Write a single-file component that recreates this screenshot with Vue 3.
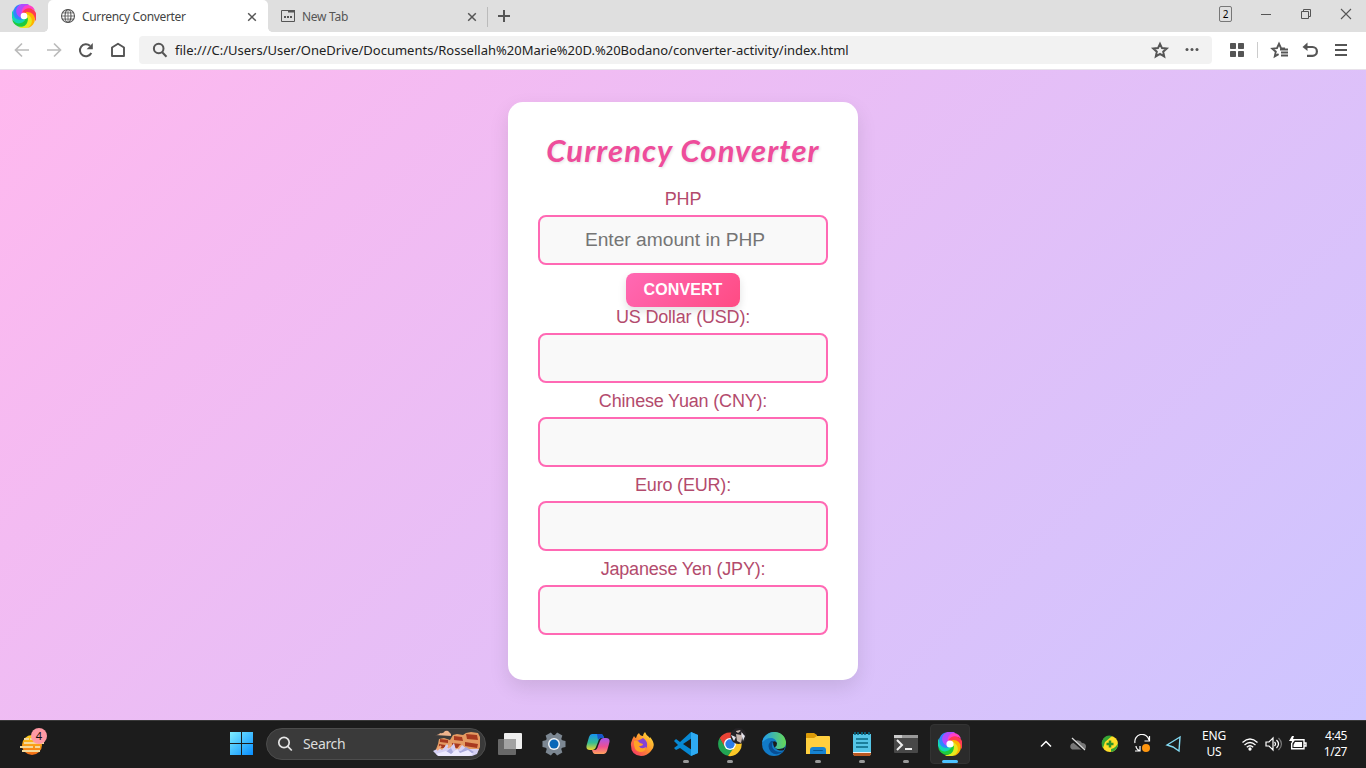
<script setup>
import { ref } from 'vue'

const amount = ref('')
const currencies = ['US Dollar (USD):', 'Chinese Yuan (CNY):', 'Euro (EUR):', 'Japanese Yen (JPY):']
const swirl = [
  { color: '#ff3fc8', angle: 0 },
  { color: '#ff3b52', angle: 50 },
  { color: '#ffb300', angle: 100 },
  { color: '#e6ea1e', angle: 140 },
  { color: '#1ecb3c', angle: 190 },
  { color: '#12d6b4', angle: 235 },
  { color: '#2f86ff', angle: 280 },
  { color: '#b04bff', angle: 320 },
]
</script>

<template>
  <div class="screen">
    <header class="tabs">
      <div class="logo">
        <svg width="24" height="24" viewBox="-12 -12 24 24">
          <circle r="8" fill="none" stroke="#e8c8d8" stroke-width="5" />
          <path v-for="s in swirl" :key="s.color" :fill="s.color" :transform="`rotate(${s.angle})`" d="M-4-1C-6-7-2-12 4-11.300C8-10.500 10.500-8 11-5C8-8 3-8 0-3.500Z" />
          <circle r="3.300" fill="#fff" />
        </svg>
      </div>
      <div class="tab active">
        <svg width="16" height="16" viewBox="0 0 16 16" fill="none" stroke="#555" stroke-width="1.100">
          <circle cx="8" cy="8" r="6.500" /><ellipse cx="8" cy="8" rx="3" ry="6.500" /><path d="M8 1.500v13M1.500 8h13M2.500 4.900h11M2.500 11.100h11" stroke-width=".8" />
        </svg>
        <span class="tab-name first">Currency Converter</span>
        <svg class="x" width="10" height="10" viewBox="0 0 10 10"><path d="M1.200 1.200l7.600 7.600M8.800 1.200L1.200 8.800" stroke="#555" stroke-width="1.500" /></svg>
      </div>
      <div class="tab">
        <svg width="16" height="16" viewBox="0 0 16 16"><path d="M1.500 2.500h13v11h-13z" fill="none" stroke="#555" /><path d="M8 2h7v2.500H8zM4 8h2v2H4zM7 8h2v2H7zM10 8h2v2h-2z" fill="#555" /></svg>
        <span class="tab-name second">New Tab</span>
        <svg class="x" width="10" height="10" viewBox="0 0 10 10"><path d="M1.200 1.200l7.600 7.600M8.800 1.200L1.200 8.800" stroke="#555" stroke-width="1.500" /></svg>
      </div>
      <i class="tab-sep"></i>
      <svg class="plus" width="12" height="12" viewBox="0 0 12 12"><path d="M6 0v12M0 6h12" stroke="#555" stroke-width="2" /></svg>
      <div class="window">
        <b class="count">2</b>
        <svg viewBox="0 0 40 28" width="40" height="28"><path d="M15 14.500h10" stroke="#555" /></svg>
        <svg viewBox="0 0 40 28" width="40" height="28" fill="none" stroke="#555"><path d="M15.500 11.500h7v7h-7zM17.500 11.500v-2h7v7h-2" /></svg>
        <svg viewBox="0 0 40 28" width="40" height="28"><path d="M15 9l10 10M25 9L15 19" stroke="#555" stroke-width="1.100" /></svg>
      </div>
    </header>

    <nav class="toolbar">
      <svg viewBox="0 0 32 28" width="32" height="28" fill="none" stroke="#bbb" stroke-width="1.700"><path d="M23 14H10M16 7.500L9.500 14l6.500 6.500" /></svg>
      <svg viewBox="0 0 32 28" width="32" height="28" fill="none" stroke="#bbb" stroke-width="1.700"><path d="M9 14h13M16 7.500l6.500 6.500-6.500 6.500" /></svg>
      <svg viewBox="0 0 32 28" width="32" height="28"><path d="M21.300 17A6 6 0 1 1 20 9.800" fill="none" stroke="#555" stroke-width="2" /><path d="M22.800 7v6.300h-6.200z" fill="#555" /></svg>
      <svg viewBox="0 0 32 28" width="32" height="28"><path d="M10 20v-8.500L16 7.800l6 3.700V20z" fill="none" stroke="#555" stroke-width="1.900" stroke-linejoin="round" /></svg>
      <div class="address">
        <svg viewBox="0 0 16 16" width="16" height="16" fill="none" stroke="#555" stroke-width="2"><circle cx="6.700" cy="6.500" r="4.800" /><path d="M10.200 10.200l4.300 4.500" /></svg>
        <span>file:///C:/Users/User/OneDrive/Documents/Rossellah%20Marie%20D.%20Bodano/converter-activity/index.html</span>
        <svg class="star" viewBox="0 0 32 28" width="32" height="28"><path d="M16 7.800l2 4.300 4.700.5-3.500 3.100 1 4.700-4.200-2.400-4.200 2.400 1-4.700-3.500-3.100 4.700-.5z" fill="none" stroke="#555" stroke-width="2" /></svg>
        <svg viewBox="0 0 32 28" width="32" height="28" fill="#555"><circle cx="11" cy="13.500" r="1.500" /><circle cx="16" cy="13.500" r="1.500" /><circle cx="21" cy="13.500" r="1.500" /></svg>
      </div>
      <svg class="apps" viewBox="0 0 14 14" width="14" height="14" fill="#555"><rect width="6" height="6" rx=".7" /><rect x="8" width="6" height="6" rx=".7" /><rect y="8" width="6" height="6" rx=".7" /><rect x="8" y="8" width="6" height="6" rx=".7" /></svg>
      <i class="tool-sep"></i>
      <svg class="fav" viewBox="0 0 30 28" width="30" height="28" fill="none" stroke="#555"><path d="M20 12.500l-4-.4-2-4.300-2 4.300-4.700.5 3.500 3.100-1 4.700 3.800-2.300" stroke-width="1.900" /><path d="M15 13.500h8M16 16.500h7M16 19.500h7" stroke-width="1.800" /></svg>
      <svg viewBox="0 0 30 28" width="30" height="28"><path d="M11 11h6.500a4.400 4.400 0 0 1 0 8.800H12" fill="none" stroke="#555" stroke-width="2.200" /><path d="M12.500 6.500v8.500L7.500 11z" fill="#555" /></svg>
      <svg viewBox="0 0 30 28" width="30" height="28"><path d="M10 9h12M10 14h12M10 19h12" stroke="#555" stroke-width="2" /></svg>
    </nav>

    <main>
      <section class="card">
        <h1>Currency Converter</h1>
        <label>PHP</label>
        <input v-model="amount" placeholder="Enter amount in PHP" class="amount">
        <button>CONVERT</button>
        <template v-for="name in currencies" :key="name">
          <label>{{ name }}</label>
          <input readonly>
        </template>
      </section>
    </main>

    <footer class="taskbar">
      <div class="weather">
        <svg width="26" height="28" viewBox="0 0 26 28"><defs><linearGradient id="sun" x2="0" y2="1"><stop stop-color="#ffd21c" /><stop offset="1" stop-color="#f36b16" /></linearGradient></defs><circle cx="12" cy="17" r="10" fill="url(#sun)" /><path d="M4 11h5M10 11h7M4 15h20M0 19h13M15 19h5M2 23h18" stroke="#f5d898" stroke-width="1.900" /></svg>
        <b>4</b>
      </div>
      <svg class="start" viewBox="0 0 23 23" width="23" height="23"><defs><linearGradient id="win" x2="1" y2="1"><stop stop-color="#7eeeff" /><stop offset="1" stop-color="#078dff" /></linearGradient></defs><path d="M0 0h11v11H0zM12 0h11v11H12zM0 12h11v11H0zM12 12h11v11H12z" fill="url(#win)" /></svg>
      <div class="search">
        <svg width="16" height="16" viewBox="0 0 16 16" fill="none" stroke="#e5e5e5" stroke-width="1.700"><circle cx="7" cy="6.500" r="5.200" /><path d="M10.800 10.400l4 4.100" /></svg>
        <span>Search</span>
        <svg class="canyon" width="48" height="27" viewBox="0 0 48 27">
          <path d="M2 5q4 0 5-2 3 1 5-2 3-1 4 1l2 2v2z" fill="#edb38d" />
          <path d="M2 22l3-8 1-5 5-1 3 1 3 1 3-5 4-1 6 1 3-2 5-1 7 1 2 4v10l-3 6H5z" fill="#e39a62" />
          <path d="M7 9l8 1v3l-8-1zM21 6l8 1 1 4-9-1zM33 4l11 1 1 5-11-1zM6 14l6 1v3H6zM19 13l9 1-1 4h-8zM32 12l13 2-1 4-12-2z" fill="#a83a20" />
          <path d="M0 21l6-3 3 2 5-6 3 4 4-5 2 7 6-5 5 4 12 0-2 5-5 2H5z" fill="#d5d0f4" />
          <path d="M4 20l4-4M15 18l3-4M25 19l3-4" stroke="#f0a878" stroke-width="2" /><path d="M10 24l8-6 2 4 8-1 5-4 8 5-5 3z" fill="#a9a9dd" /><path d="M3 24l10-3 5 3 6-5 3 4 8-3 5 4-4 2H6z" fill="#edeaff" />
        </svg>
      </div>
      <div class="apps-row">
        <div class="app"><svg width="24" height="24" viewBox="0 0 24 24"><rect x="6" y="1" width="18" height="16" rx="1" fill="#eee" /><rect y="7" width="18" height="16" rx="1" fill="#686868" /><path d="M6 7h12v10H6z" fill="#a2a2a2" /></svg></div>
        <div class="app"><svg width="24" height="24" viewBox="-12 -12 24 24"><g fill="#7c8792"><circle r="9" /><path v-for="n in 6" :key="n" :transform="`rotate(${n * 60 + 30})`" d="M-4-7l1-4.500h6L4-7z" /></g><circle r="6" fill="#f0f3f6" /><circle r="4.500" fill="#0867b8" /></svg></div>
        <div class="app"><svg width="24" height="24" viewBox="0 0 24 24"><defs><linearGradient id="co1" x2="0" y2="1"><stop stop-color="#1692f2" /><stop offset=".55" stop-color="#36bd91" /><stop offset="1" stop-color="#f0d52d" /></linearGradient><linearGradient id="co2" x2="0" y2="1"><stop stop-color="#a657ee" /><stop offset=".55" stop-color="#ef4f91" /><stop offset="1" stop-color="#ffa35c" /></linearGradient></defs><path d="M6 2h9q2 0 3 4h-3q-2 0-3 4l-2 5q-1 3-4 3H4q-5 0-3-6L3 5q1-3 3-3z" fill="url(#co1)" /><path d="M18 22H9q-2 0-3-4h3q2 0 3-4l2-5q1-3 4-3h2q5 0 3 6l-2 7q-1 3-3 3z" fill="url(#co2)" /><path d="M11 2h4q2 0 3 4h-3q-2 0-3 2z" fill="#1756cc" /></svg></div>
        <div class="app"><svg width="24" height="24" viewBox="0 0 24 24"><defs><linearGradient id="ff" x1="1" y1="0" x2="0" y2="1"><stop stop-color="#ffee3c" /><stop offset=".5" stop-color="#ff902c" /><stop offset="1" stop-color="#f32670" /></linearGradient></defs><path d="M13 4q0-2 2-4 1 3 4 5 1 2 1 0 7 8 1 14-4 5-10 5Q0 23 1 11q1-4 3-7 1 2 2 2Q7 2 9 1q1 3 4 3z" fill="url(#ff)" /><path d="M7 9q5-2 6-3 5 3 4 9-3 5-8 2-5-3-2-8z" fill="#8342d5" /><path d="M4 9q4-1 6 2l3 1q0 2-4 2 2 4 7 1 0 5-6 5-7-1-6-11z" fill="#ffa126" /></svg></div>
        <div class="app running"><svg width="24" height="24" viewBox="0 0 24 24"><path d="M17 0L6 10 2 7 0 9l4 4-4 3 2 2 4-2 11 8 7-3V3zm1 6v12l-9-6z" fill="#0788d3" /><path d="M17 0l7 3v18l-7 3z" fill="#2eaaf2" /></svg></div>
        <div class="app running"><svg width="32" height="32" viewBox="0 0 32 32"><path d="M5.700 10A12 12 0 0 1 26 10H16L10 19z" fill="#e94335" /><path d="M5.700 10A12 12 0 0 0 14 27.800L21 19H11z" fill="#22a453" /><path d="M26 10A12 12 0 0 1 14 28l7-10q1-5-3-8z" fill="#fbc727" /><circle cx="16" cy="16" r="6" fill="#fff" /><circle cx="16" cy="16" r="4.700" fill="#2b7de9" /><circle cx="24.500" cy="8" r="8" fill="#252326" /><path d="M22 3l4-1 3 4-2 9-4-2-1-7z" fill="#c7b6b0" /><path d="M17 7l5 2-2 4M27 4l2 9 2-5" fill="#e4e4ed" /><path d="M20 2l4 3 4-3-1 5-5-1-1 4z" fill="#25232a" /></svg></div>
        <div class="app"><svg width="24" height="24" viewBox="0 0 24 24"><defs><linearGradient id="ed" x2="1"><stop stop-color="#209bf2" /><stop offset="1" stop-color="#67d955" /></linearGradient></defs><circle cx="12" cy="12" r="12" fill="#117ac7" /><path d="M0 11C2-3 22-4 24 10c0 5-3 7-7 7-3 0-4-1-4-2 4-3 1-9-4-9-4 0-7 2-9 5z" fill="url(#ed)" /><path d="M9 9q-5 5 0 11 6 5 13-1-4 2-8 0-4-2-4-6 0-2 2-4z" fill="#084d93" /><path d="M11 10q2-2 4 1 0 3-2 4 0 2 4 2 4 0 6-2l-1 3q-3 1-6 0-5-2-5-8z" fill="#1c1c1c" /></svg></div>
        <div class="app running"><svg width="24" height="24" viewBox="0 0 24 24"><path d="M0 5V2q0-1 1-1h7l3 2v4H0z" fill="#dc9b08" /><path d="M0 6h8l3-2h12q1 0 1 1v17H0z" fill="#ffcf3f" /><path d="M4 22v-4q0-3 3-3h10q3 0 3 3v4z" fill="#1683d2" /><path d="M8 18h8q1 0 1 1H7q0-1 1-1z" fill="#075590" /></svg></div>
        <div class="app running"><svg width="24" height="24" viewBox="0 0 24 24"><path d="M3 2h18v21H3z" fill="#55c5e6" /><path d="M5 0v3M8 0v3M12 0v3M15 0v3M19 0v3M6 7h12M6 11h12M6 15h12" stroke="#086883" stroke-width="1.700" /><path d="M3 20h18v2l-1 2H4l-1-2z" fill="#b9571f" /><path d="M3 20h18v1H3z" fill="#eee" /></svg></div>
        <div class="app running"><svg width="24" height="24" viewBox="0 0 24 24"><rect y="3" width="24" height="18" rx="1" fill="#484848" /><path d="M0 3h24v3H0z" fill="#999" /><path d="M0 3h8v3H0z" fill="#ccc" /><path d="M3 8l5 5-5 5M11 17h7" fill="none" stroke="#eee" stroke-width="2" /></svg></div>
        <div class="app current"><svg width="24" height="24" viewBox="-12 -12 24 24"><path v-for="s in swirl" :key="s.color" :fill="s.color" :transform="`rotate(${s.angle})`" d="M-4-1C-6-7-2-12 4-11.300C8-10.500 10.500-8 11-5C8-8 3-8 0-3.500Z" /><circle r="3.600" fill="#fff" /></svg></div>
      </div>
      <div class="tray">
        <svg viewBox="0 0 32 20" width="32" height="20"><path d="M11 12.500l5-5 5 5" fill="none" stroke="#fff" stroke-width="1.500" /></svg>
        <svg viewBox="0 0 32 20" width="32" height="20"><path d="M10 15.500a3.500 3.500 0 0 1 1-6.500 5 5 0 0 1 9 0q4 0 4 3.500t-3 3z" fill="#777" /><path d="M9 5l14 12" stroke="#1c1c1c" stroke-width="2.400" /><path d="M10 4l13 12" stroke="#ddd" stroke-width="1.200" /></svg>
        <svg viewBox="0 0 32 20" width="32" height="20"><circle cx="16" cy="10" r="8" fill="#ffdf28" /><path d="M9 14a8 8 0 0 1 9-12L11 8zM17 18a8 8 0 0 0 7-9q-2 5-7 6z" fill="#36a536" /><path d="M16 6.500v7M12.500 10h7" stroke="#2b942a" stroke-width="2.500" /></svg>
        <svg viewBox="0 0 32 20" width="32" height="20" fill="none" stroke="#fff" stroke-width="1.200"><path d="M9 9a7 7 0 0 1 14-3M23.500 2v5h-5M14 17q-4-2-4-5M9 17h5v-5" /><circle cx="20" cy="14" r="4" fill="#ff960f" stroke="none" /></svg>
        <svg viewBox="0 0 32 20" width="32" height="20"><path d="M22 3L9 11l6 2 6 4z" fill="none" stroke="#83d9f2" stroke-width="1.400" /></svg>
        <div class="lang">ENG<br>US</div>
        <svg viewBox="0 0 24 20" width="24" height="20" fill="none" stroke="#fff" stroke-width="1.300"><path d="M4.500 8.500q7.500-7 15 0M6.500 11q5.500-5 11 0M8.800 13.300q3.200-3 6.400 0" /><circle cx="12" cy="15" r="1" fill="#fff" /></svg>
        <svg viewBox="0 0 24 20" width="24" height="20" fill="none" stroke="#fff" stroke-width="1.200"><path d="M4 8h3l4-4v12l-4-4H4zM12.500 8q2 2 0 4M14.500 6q4 4 0 8" /><path d="M16.500 4q6 6 0 12" stroke="#777" /></svg>
        <svg viewBox="0 0 24 20" width="24" height="20"><path d="M9 5.700h9v9H5.700V9M18.500 9h1.500v3h-1.500" fill="none" stroke="#fff" stroke-width="1.400" /><path d="M9 8h7v5H7.500v-2zM6 2L3 7h3l-1 4 5-6H7l1-3z" fill="#fff" /></svg>
        <div class="clock">4:45<br>1/27</div>
      </div>
    </footer>
  </div>
</template>

<style>
body { margin: 0; overflow: hidden; }
</style>

<style scoped>
* { box-sizing: border-box; }
.screen { width: 1366px; height: 768px; display: flex; flex-direction: column; font-family: "Noto Sans", sans-serif; overflow: hidden; }
svg { display: block; flex: none; }
.tabs { height: 32px; background: #dfdfdf; display: flex; flex: none; align-items: center; }
.logo { width: 48px; display: grid; place-items: center; }
.tab { height: 32px; width: 219px; display: flex; align-items: center; padding: 0 10px 0 12px; position: relative; }
.active { width: 220px; background: #fff; border-radius: 5px 5px 0 0; padding-right: 11px; }
.active::before, .active::after { content: ""; position: absolute; bottom: 0; width: 4px; height: 4px; left: -4px; background: radial-gradient(circle at 0 0, #dfdfdf 3.500px, #fff 4px); }
.active::after { left: auto; right: -4px; background: radial-gradient(circle at 100% 0, #dfdfdf 3.500px, #fff 4px); }
.tab-name { margin-left: 6px; font-size: 12px; color: #555; white-space: nowrap; }
.first { color: #444; letter-spacing: -.36px; }
.second { letter-spacing: -.28px; }
.x { margin-left: auto; position: relative; top: 1px; }
.tab-sep { width: 1px; height: 20px; background: #bbb; margin-top: 2px; }
.plus { margin-left: 10px; }
.window { height: 28px; margin-left: auto; display: flex; align-self: flex-start; align-items: center; }
.count { width: 13px; height: 16px; margin-right: 14px; border: 1px solid #777; border-radius: 2px; font: 10px/15px "Noto Sans", sans-serif; text-align: center; }
.toolbar { height: 38px; flex: none; padding: 4px 11px 5px 6px; display: flex; align-items: center; background: #fff; border-bottom: 1px solid #e7e2ea; }
.address { height: 28px; width: 1073px; margin-left: 5px; background: #f2f2f2; border-radius: 4px; display: flex; align-items: center; padding-left: 13px; padding-right: 4px; }
.address span { margin-left: 7px; font-size: 13px; letter-spacing: 0; color: #222; white-space: nowrap; }
.star { margin-left: auto; }
.apps { margin-left: 18px; }
.tool-sep { width: 1px; height: 16px; margin-left: 13px; background: #ccc; }
.fav { margin-left: 7px; }
main { height: 650px; flex: none; display: flex; justify-content: center; align-items: flex-start; padding-top: 32px; background: linear-gradient(135deg, #ffb8ee, #cdc5ff); overflow: hidden; }
.card { width: 350px; height: 578px; background: #fff; border-radius: 15px; padding: 30px; display: flex; flex-direction: column; align-items: center; box-shadow: 0 8px 20px rgba(0,0,0,.1); font-family: "Liberation Sans", Arial, sans-serif; }
h1 { margin: -2px 0 19px; height: 40px; font: italic bold 31px/40px Lato, sans-serif; letter-spacing: 1.100px; color: #ee4d9b; white-space: nowrap; text-shadow: 1px 1px 3px rgba(0,0,0,.12); }
label { height: 20px; font-size: 18px; line-height: 20px; color: #b34b6d; margin-bottom: 6px; letter-spacing: -.18px; }
input { width: 290px; height: 50px; flex: none; border: 2px solid #ff69b4; border-radius: 8px; background: #f9f9f9; margin: 0 0 8px; padding: 0; font: 19.200px "Liberation Sans", Arial, sans-serif; text-align: center; outline: none; }
.amount { padding-right: 16px; }
input::placeholder { color: #757575; opacity: 1; }
button { width: 114px; height: 34px; flex: none; padding: 0; border: 0; border-radius: 8px; background: linear-gradient(135deg, #ff69b4, #ff4b83); color: #fff; font: bold 16px "Liberation Sans", Arial, sans-serif; letter-spacing: .1px; box-shadow: 0 4px 8px rgba(0,0,0,.12); }
.taskbar { height: 48px; flex: none; background: #1c1c1c; border-top: 1px solid #393939; padding-bottom: 2px; display: flex; align-items: center; color: #fff; }
.weather { width: 40px; height: 28px; margin-left: 20px; margin-top: -4px; position: relative; }
.weather b { position: absolute; left: 11px; top: 0; width: 16px; height: 16px; border-radius: 50%; background: #ff99a4; color: #111; font: 11px/16px "Noto Sans", sans-serif; text-align: center; }
.start { margin-left: 170px; }
.search { width: 220px; height: 32px; margin-left: 13px; border-radius: 16px; border: 1px solid #4c4c4c; background: #3a3a3a; display: flex; align-items: center; padding: 0 4px 0 10px; }
.search span { margin-left: 10px; font-size: 14px; letter-spacing: -.35px; color: #ddd; }
.canyon { margin-left: auto; }
.apps-row { display: flex; margin-left: 4px; }
.app { width: 40px; height: 40px; margin-right: 4px; border-radius: 4px; display: grid; place-items: center; position: relative; }
.running::after, .current::after { content: ""; position: absolute; bottom: 1px; left: 17px; width: 6px; height: 3px; border-radius: 2px; background: #999; }
.current { background: #2b2b2b; border: 1px solid #333; }
.current::after { width: 16px; left: 11px; bottom: 0; background: #4cc2ff; }
.tray { margin-left: auto; display: flex; align-items: center; padding-right: 19px; }
.lang { width: 48px; text-align: center; font-size: 12px; line-height: 16px; letter-spacing: -.2px; }
.clock { width: 37px; text-align: right; font-size: 12px; line-height: 16px; letter-spacing: -.45px; }
</style>
